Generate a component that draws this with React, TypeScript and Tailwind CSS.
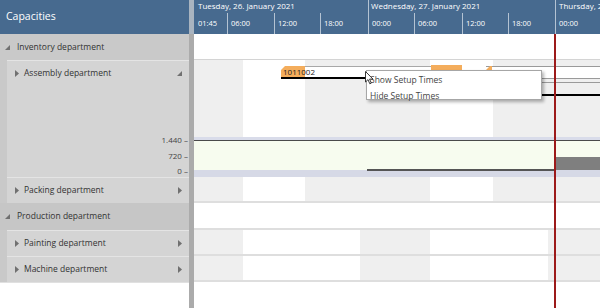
import React from "react";

const Collapsed = () => (
  <svg width="4" height="7" viewBox="0 0 4 7" className="shrink-0">
    <path d="M0 0L4 3.5L0 7Z" fill="#707070" />
  </svg>
);
const Expanded = () => (
  <svg width="5" height="5" viewBox="0 0 5 5" className="shrink-0">
    <path d="M5 0L5 5L0 5Z" fill="#707070" />
  </svg>
);

const BandsA = () => (
  <div className="flex h-full w-full">
    <div className="w-[49px] bg-[#efefef]" />
    <div className="w-[62px] bg-white" />
    <div className="w-[125px] bg-[#efefef]" />
    <div className="w-[63px] bg-white" />
    <div className="flex-1 bg-[#efefef]" />
  </div>
);
const BandsB = () => (
  <div className="flex h-full w-full">
    <div className="w-[49px] bg-[#efefef]" />
    <div className="w-[117px] bg-white" />
    <div className="w-[70px] bg-[#efefef]" />
    <div className="w-[118px] bg-white" />
    <div className="flex-1 bg-[#efefef]" />
  </div>
);

function SubRow({ label, expanded, h, children }: { label: string; expanded?: boolean; h: string; children?: React.ReactNode }) {
  return (
    <div className={`${h} bg-[#c9c9c9] pl-[7px]`}>
      <div className="h-full bg-[#d4d4d4] border-t border-[#e4e4e4] flex flex-col">
        <div className="h-[25px] flex items-center pl-[8px] pr-[7px] shrink-0">
          <Collapsed />
          <span className="ml-[5px] flex-1 text-[8.5px] text-[#333]">{label}</span>
          {expanded ? <Expanded /> : <Collapsed />}
        </div>
        {children}
      </div>
    </div>
  );
}

export default function App() {
  const hours = [
    { w: "w-[33px]", t: "01:45", b: false },
    { w: "w-[47px]", t: "06:00", b: true },
    { w: "w-[46px]", t: "12:00", b: true },
    { w: "w-[48px]", t: "18:00", b: true },
    { w: "w-[46px]", t: "00:00", b: true },
    { w: "w-[48px]", t: "06:00", b: true },
    { w: "w-[46px]", t: "12:00", b: true },
    { w: "w-[47px]", t: "18:00", b: true },
    { w: "flex-1", t: "00:00", b: true },
  ];
  return (
    <div className="w-[600px] h-[308px] relative flex overflow-hidden bg-white font-['Open_Sans',sans-serif]">
      {/* Left panel */}
      <div className="w-[189px] flex flex-col shrink-0">
        <div className="h-[34px] bg-[#476a8f] text-white text-[10.5px] flex items-center pl-[6px]">Capacities</div>
        <div className="h-[26px] bg-[#c9c9c9] flex items-center pl-[5px]">
          <Expanded />
          <span className="ml-[7px] text-[8.5px] text-[#333]">Inventory department</span>
        </div>
        <SubRow label="Assembly department" expanded h="h-[117px]">
          <div className="h-[47px]" />
          <div className="flex flex-col items-end pr-[1px] text-[8px] text-[#444]">
            <div className="h-[14px] leading-[14px]">1.440 –</div>
            <div className="h-[18px] leading-[18px]">720 –</div>
            <div className="h-[12px] leading-[12px]">0 –</div>
          </div>
        </SubRow>
        <SubRow label="Packing department" h="h-[26px]" />
        <div className="h-[27px] bg-[#c6c6c6] flex items-center pl-[5px]">
          <Expanded />
          <span className="ml-[7px] text-[8.5px] text-[#333]">Production department</span>
        </div>
        <SubRow label="Painting department" h="h-[26px]" />
        <SubRow label="Machine department" h="h-[26px]" />
        <div className="flex-1 bg-white border-t border-[#e0e0e0]" />
      </div>

      {/* Splitter */}
      <div className="w-[5px] shrink-0 flex flex-col">
        <div className="h-[34px] bg-[#a9b4c0]" />
        <div className="flex-1 bg-[#ababab]" />
      </div>

      {/* Timeline */}
      <div className="flex-1 flex flex-col relative">
        <div className="h-[34px] bg-[#476a8f] text-white text-[7.5px] flex flex-col">
          <div className="h-[13px] flex leading-[11px] text-[8px]">
            <div className="w-[174px] pl-[4px]">Tuesday, 26. January 2021</div>
            <div className="w-[187px] border-l border-[#b4c3d3] pl-[2px]">Wednesday, 27. January 2021</div>
            <div className="flex-1 border-l border-[#b4c3d3] pl-[3px] whitespace-nowrap overflow-hidden">Thursday, 28. January 2021</div>
          </div>
          <div className="flex-1 flex">
            {hours.map((h, i) => (
              <div key={i} className={`${h.w} ${h.b ? "border-l border-[#b4c3d3] pl-[3px]" : "pl-[4px]"} flex items-center whitespace-nowrap overflow-hidden`}>
                {h.t}
              </div>
            ))}
          </div>
        </div>

        <div className="h-[26px] bg-white border-b border-[#d4d4d4]" />

        {/* Assembly row */}
        <div className="h-[117px] flex flex-col relative">
          <div className="h-[77px]"><BandsA /></div>
          <svg width="406" height="40" className="block">
            <rect x="0" y="0" width="406" height="3" fill="#d9dcea" />
            <rect x="0" y="3" width="406" height="1" fill="#4a4a4a" />
            <rect x="0" y="4" width="406" height="29" fill="#f7fcef" />
            <rect x="362" y="20" width="44" height="13" fill="#7f7f7f" />
            <rect x="0" y="33" width="406" height="7" fill="#d6d9e6" />
            <rect x="173" y="32" width="189" height="2" fill="#555" />
          </svg>

          {/* tasks */}
          <div className="absolute left-[111px] top-[6px] w-[126px] h-[11px] bg-white border-t border-[#a8a8a8]" />
          <div className="absolute left-[87px] top-[6px] w-[24px] h-[11px] bg-[#f4ad5c] [clip-path:polygon(4px_0,100%_0,100%_100%,0_100%,0_4px)]" />
          <div className="absolute left-[89px] top-[6px] h-[11px] leading-[11px] text-[8px] text-[#222]">1011002</div>
          <div className="absolute left-[87px] top-[17px] w-[175px] h-[2px] bg-black" />
          <div className="absolute left-[237px] top-[5px] w-[31px] h-[10px] bg-[#f4ad5c]" />
          <div className="absolute left-[292px] top-[6px] w-[114px] h-[13px] bg-white border-t border-b border-[#9a9a9a]" />
          <div className="absolute left-[292px] top-[6px] w-[6px] h-[13px] bg-[#f4ad5c] [clip-path:polygon(4px_0,100%_0,100%_100%,0_100%,0_4px)]" />
          <div className="absolute left-[294px] top-[6px] h-[11px] leading-[11px] text-[8px] text-[#777]">1011003</div>
          <div className="absolute left-[292px] top-[22px] w-[114px] h-[1px] bg-[#9a9a9a]" />
          <div className="absolute left-[270px] top-[34px] w-[136px] h-[2px] bg-black" />
        </div>

        <div className="h-[26px] border-b-2 border-[#dedede]"><BandsA /></div>
        <div className="h-[27px] bg-white border-b-2 border-[#dedede]" />
        <div className="h-[26px] border-b-2 border-[#dedede]"><BandsB /></div>
        <div className="h-[26px] border-b-2 border-[#dedede]"><BandsB /></div>
        <div className="flex-1 bg-white" />

        {/* current time line */}
        <div className="absolute left-[360px] top-[34px] bottom-0 w-[2px] bg-[#9c1a1a]" />
      </div>

      {/* Context menu */}
      <div className="absolute left-[366px] top-[70px] w-[176px] h-[30px] bg-white border border-[#a6a6a6] shadow-[2px_2px_3px_rgba(0,0,0,0.3)] text-[8.5px] text-[#444]">
        <div className="absolute left-[3px] top-[3px] leading-[12px]">Show Setup Times</div>
        <div className="absolute left-[3px] top-[19px] leading-[12px]">Hide Setup Times</div>
      </div>

      {/* Mouse cursor */}
      <svg className="absolute left-[365px] top-[71px]" width="9" height="14" viewBox="0 0 9 14">
        <path d="M0.5 0.5L0.5 11L3 8.6L4.8 12.8L6.3 12.1L4.6 8.1L8 8.1Z" fill="white" stroke="#222" strokeWidth="0.9" strokeLinejoin="round" />
      </svg>
    </div>
  );
}
